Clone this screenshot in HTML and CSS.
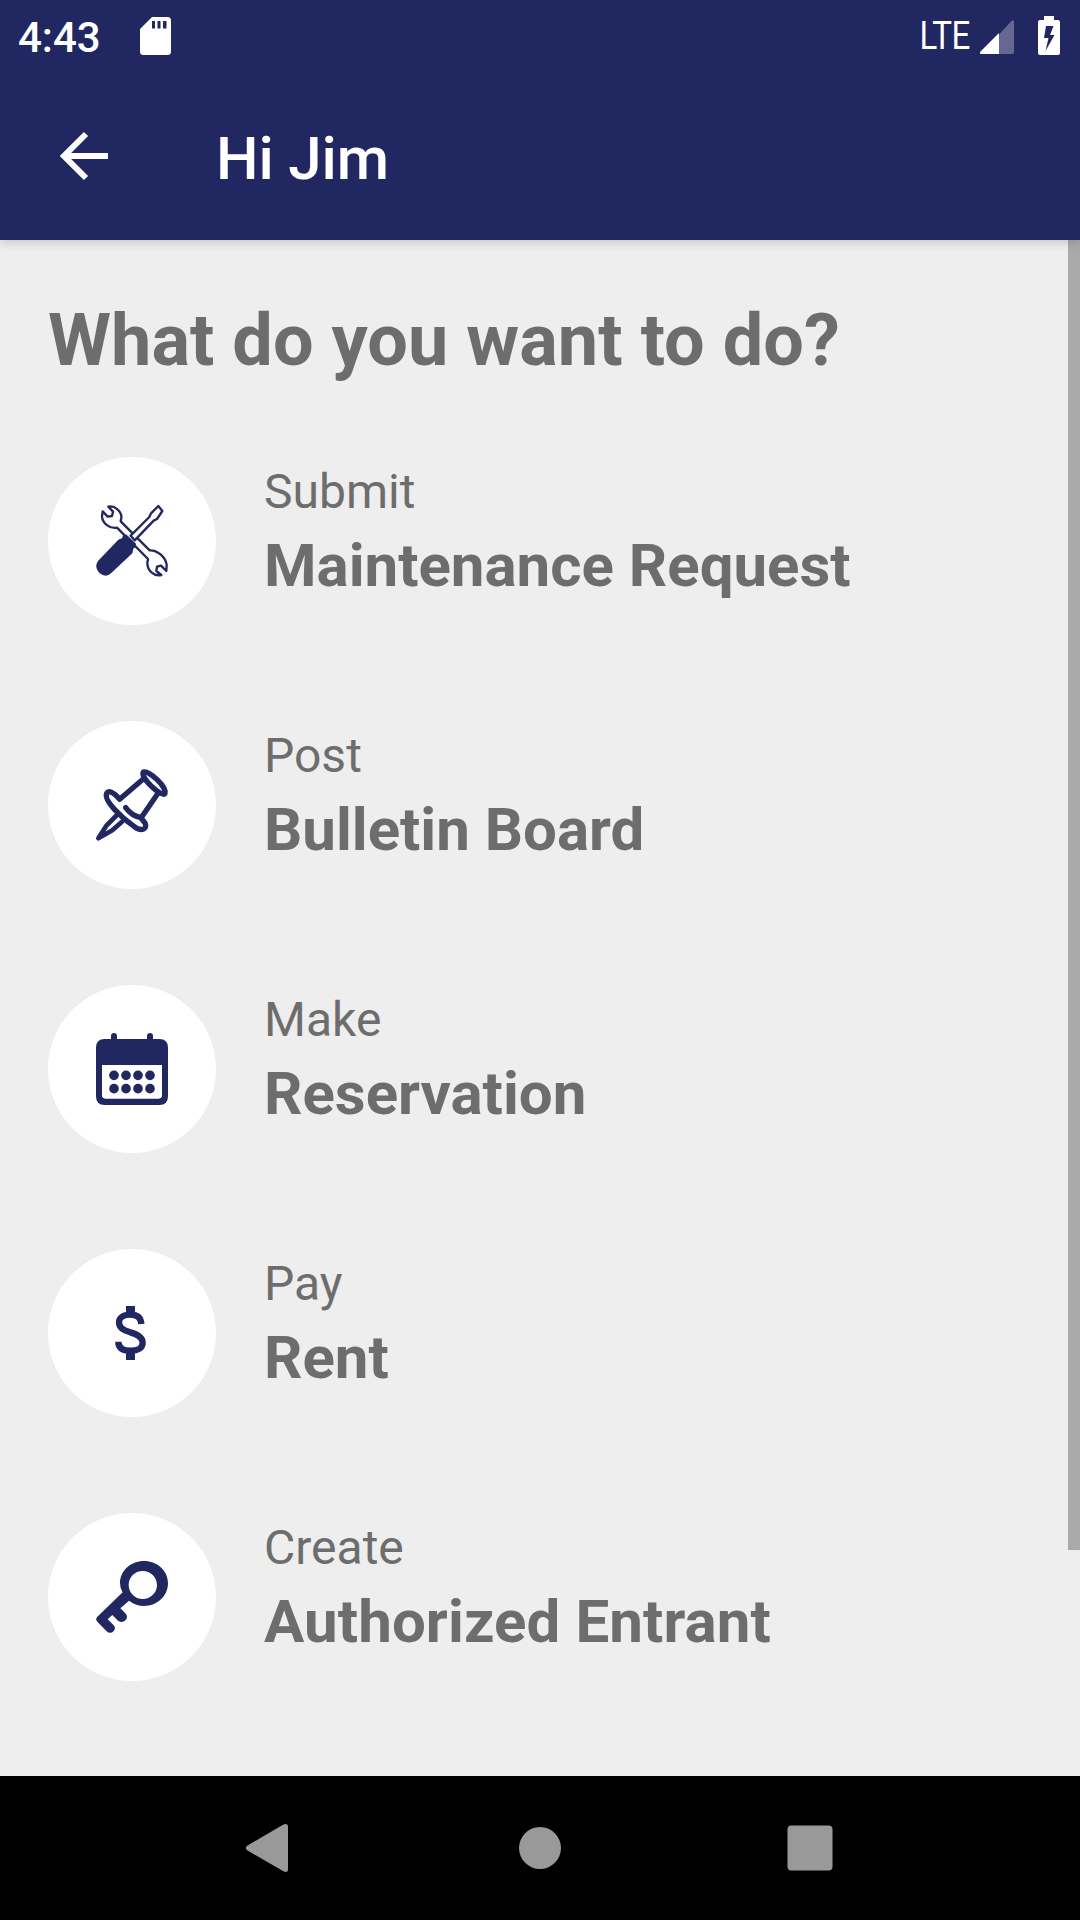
FILE: index.html
```html
<!DOCTYPE html>
<html lang="en">
<head>
<meta charset="utf-8">
<title>Hi Jim</title>
<link rel="stylesheet" href="styles.css">
</head>
<body>
<div class="screen">
  <header class="top">
    <div class="status">
      <span class="clock">4:43</span>
      <svg class="sd" viewBox="0 0 31 38"><path fill="#fff" fill-rule="evenodd" d="M12 0H27.500Q31 0 31 3.500V34.500Q31 38 27.500 38H3.500Q0 38 0 34.500V12ZM12 4V11.500H15V4ZM17.500 4V11.500H20.500V4ZM23 4V11.500H26.500V4Z"/></svg>
      <span class="network">LTE</span>
      <svg class="signal" viewBox="0 0 34 34"><path fill="#666892" d="M19 14.500 31.500 1Q34 -1 34 2V32Q34 34 32 34H19Z"/><path fill="#fff" d="M19 13V34H1.500Q-1 34 .5 31.500Z"/></svg>
      <svg class="battery" viewBox="0 0 22 39"><path fill="#fff" fill-rule="evenodd" d="M6 0H16V4H20Q22 4 22 6V37Q22 39 20 39H2Q0 39 0 37V6Q0 4 2 4H6ZM8 10 6 22H10.500L7.500 35 16.500 19H12L15.500 10Z"/></svg>
    </div>
    <div class="appbar">
      <svg class="back" viewBox="0 0 48 48"><path fill="none" stroke="#fff" stroke-width="6" d="M26 2 4 24 26 46M4 24H48"/></svg>
      <h1 class="title">Hi Jim</h1>
    </div>
  </header>
  <main class="content">
    <div class="page">
      <h2 class="question">What do you want to do?</h2>
      <ul class="actions">
        <li class="action">
          <span class="disc"><svg class="icon" viewBox="42 45 216 216">
            <g fill="#fff" stroke="#212761" stroke-width="7" stroke-linejoin="round">
              <path d="M79 50C98 46 120 64 118 84L116 94 203 181C226 180 250 200 254 224L253 243 237 227 225 230 223 243 238 255C215 260 196 241 196 218L198 207 105 113C84 117 60 100 60 78L62 64 77 80 90 78 93 65Z"/>
              <path d="M146 137 202 81 207 70 229 48 241 63 225 87 215 92 158 151Z"/>
            </g>
            <path fill="#212761" d="M124 134 134 134 162 161 161 171 154 176 151 190 87 250Q72 264 53 250 35 231 48 213L109 149 120 145Z"/>
          </svg></span>
          <div class="label"><span class="verb">Submit</span><span class="name">Maintenance Request</span></div>
        </li>
        <li class="action">
          <span class="disc"><svg class="icon" viewBox="42 42 216 216">
            <g fill="none" stroke="#212761" stroke-width="16" stroke-linecap="round" stroke-linejoin="round">
              <path d="M184 51C201 45 256 97 249 116 239 128 174 68 184 51Z"/>
              <path d="M181 74 113 133C93 109 79 106 74 115 64 137 121 190 156 214 177 231 198 223 189 204L177 189 228 115M131 158C142 173 154 184 177 188"/>
              <path d="M105 180 74 211 49 250 91 226 120 200" stroke-width="14"/>
            </g>
          </svg></span>
          <div class="label"><span class="verb">Post</span><span class="name">Bulletin Board</span></div>
        </li>
        <li class="action">
          <span class="disc"><svg class="icon" viewBox="42 39 216 216">
            <path fill="#212761" fill-rule="evenodd" d="M68 57H87V48Q87 39 96 39T105 48V57H195V48Q195 39 204 39T213 48V57H232Q258 57 258 83V229Q258 255 232 255H68Q42 255 42 229V83Q42 57 68 57ZM60 135V226Q60 236 70 236H230Q240 236 240 226V135Z"/>
            <g fill="#212761"><circle cx="96" cy="166" r="14.500"/><circle cx="132" cy="166" r="14.500"/><circle cx="168" cy="166" r="14.500"/><circle cx="204" cy="166" r="14.500"/><circle cx="96" cy="206" r="14.500"/><circle cx="132" cy="206" r="14.500"/><circle cx="168" cy="206" r="14.500"/><circle cx="204" cy="206" r="14.500"/></g>
          </svg></span>
          <div class="label"><span class="verb">Make</span><span class="name">Reservation</span></div>
        </li>
        <li class="action">
          <span class="disc"><svg class="icon" viewBox="42 36 216 216">
            <path fill="none" stroke="#212761" stroke-width="19" d="M178 117C177 99 166 89 145 89 124 89 111 98 111 112 111 128 123 135 145 142 170 149 182 157 182 173 182 189 168 197 146 197 122 197 109 188 109 170"/>
            <path fill="#212761" d="M132 63H159V88H132ZM132 198H159V225H132Z"/>
          </svg></span>
          <div class="label"><span class="verb">Pay</span><span class="name">Rent</span></div>
        </li>
        <li class="action">
          <span class="disc"><svg class="icon" viewBox="42 48 216 216">
            <path fill="#212761" fill-rule="evenodd" d="M186 48C226 48 258 77 258 115S226 183 186 183Q162 183 141 167L115 190 130 205Q138 213 133 223 123 236 108 227L91 210 77 223 95 241Q102 249 96 257 85 269 74 259L46 230Q39 223 46 215L122 142Q114 130 114 115C114 77 146 48 186 48ZM182 78C158 78 140 97 140 120S158 162 182 162 225 143 225 120 206 78 182 78Z"/>
          </svg></span>
          <div class="label"><span class="verb">Create</span><span class="name wide">Authorized Entrant</span></div>
        </li>
      </ul>
    </div>
    <div class="track"><div class="thumb"></div></div>
  </main>
  <nav class="navbar">
    <svg class="nav" viewBox="0 0 48 48"><path fill="#999" d="M1.500 21.500 37 .8Q42 -1.500 42 3V45Q42 49.500 37 47L1.500 26.500Q-2 24 1.500 21.500Z"/></svg>
    <svg class="nav" viewBox="0 0 48 48"><circle cx="24" cy="24" r="21" fill="#999"/></svg>
    <svg class="nav" viewBox="0 0 48 48"><rect x="1.500" y="1.500" width="45" height="45" rx="4" fill="#999"/></svg>
  </nav>
</div>
</body>
</html>
```
FILE: styles.css
```css
* { box-sizing: border-box; margin: 0; padding: 0; }
body { font-family: Roboto, sans-serif; color: #6d6d6d; }
svg { display: block; flex: none; overflow: visible; }
.screen { width: 1080px; height: 1920px; display: flex; flex-direction: column; overflow: hidden; background: #eee; }
.top { height: 240px; background: #212761; color: #fff; box-shadow: 0 2px 10px rgba(0, 0, 0, .18); z-index: 1; flex: none; }
.status { height: 72px; display: flex; align-items: center; padding: 0 20px 0 18px; }
.clock { font-size: 42px; font-weight: 500; line-height: 72px; padding-top: 3px; width: 121.500px; }
.sd { width: 31px; height: 38px; }
.network { font-size: 38px; line-height: 72px; margin-left: auto; letter-spacing: -.6px; transform: scaleX(.87); transform-origin: right; }
.signal { width: 34px; height: 34px; margin-left: 10px; margin-top: 2px; }
.battery { width: 22px; height: 39px; margin-left: 24px; margin-top: -1px; }
.appbar { height: 168px; display: flex; align-items: center; padding-left: 60px; }
.back { width: 48px; height: 48px; margin-top: -1px; }
.title { font-size: 60px; font-weight: 500; line-height: 70px; margin-left: 108px; padding-top: 5px; letter-spacing: -.15px; }
.content { flex: 1; display: flex; justify-content: space-between; }
.page { padding: 56px 0 0 48px; }
.question { font-size: 72px; font-weight: 700; line-height: 90px; letter-spacing: .05px; }
.actions { list-style: none; margin-top: 71px; display: flex; flex-direction: column; gap: 96px; }
.action { height: 168px; display: flex; gap: 48px; }
.disc { width: 168px; height: 168px; border-radius: 50%; background: #fff; display: grid; place-items: center; flex: none; }
.icon { width: 72px; height: 72px; }
.label { display: flex; flex-direction: column; padding-top: 3px; gap: 2px; white-space: nowrap; }
.verb { font-size: 48px; line-height: 64px; }
.name { font-size: 60px; font-weight: 700; line-height: 80px; }
.wide { letter-spacing: .1px; }
.track { width: 12px; }
.thumb { height: 1310px; background: #aaa; }
.navbar { height: 144px; background: #000; display: flex; align-items: center; justify-content: center; gap: 222px; flex: none; }
.nav { width: 48px; height: 48px; }
```
